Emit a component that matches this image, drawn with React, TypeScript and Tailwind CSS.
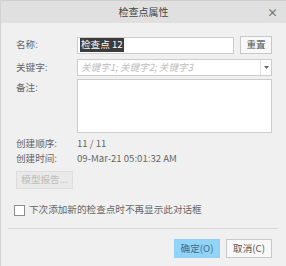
export default function App() {
  const font = { fontFamily: '"Noto Sans CJK SC", "Noto Sans", sans-serif' };
  return (
    <div
      style={font}
      className="flex h-[266px] w-[286px] flex-col overflow-hidden border-l border-[#d2d2d2] bg-[#f0f0f0] text-[9.6px] leading-none text-[#666]"
    >
      <div className="relative flex h-[23px] shrink-0 items-center justify-center border-t border-[#cdcdcd] bg-[#e0e0e0] text-[10px] text-[#444]">
        检查点属性
        <span className="absolute right-[8px] top-[6px] text-[11px] font-bold text-[#777]">×</span>
      </div>

      <div className="flex flex-1 flex-col pl-[15px] pr-[14px]">
        <div className="mt-[13px] flex h-[18px] items-center">
          <span className="w-[61px]">名称:</span>
          <div className="flex h-[17px] w-[157px] items-center border border-[#cccccc] bg-white pl-[2px]">
            <span className="bg-[#3c3c3c] px-[1px] py-[2px] text-white">检查点 12</span>
          </div>
          <button className="ml-auto h-[18px] w-[32px] border border-[#c8c8c8] bg-[#f8f8f8] text-[#555]">
            重置
          </button>
        </div>

        <div className="mt-[5px] flex h-[17px] items-center">
          <span className="w-[61px]">关键字:</span>
          <div className="flex h-[17px] flex-1 items-center border border-[#cccccc] bg-white">
            <span className="flex-1 pl-[3px] italic text-[#bcbcbc]">关键字1; 关键字2; 关键字3</span>
            <span className="flex h-full w-[11px] items-center justify-center border-l border-[#e0e0e0]">
              <svg width="5" height="3" viewBox="0 0 5 3">
                <path d="M0 0H5L2.5 3Z" fill="#666" />
              </svg>
            </span>
          </div>
        </div>

        <div className="mt-[3px] flex">
          <span className="mt-[4px] w-[61px]">备注:</span>
          <div className="h-[54px] flex-1 border border-[#cccccc] bg-white" />
        </div>

        <div className="mt-[3px] flex h-[15px] items-center">
          <span className="w-[61px]">创建顺序:</span>
          <span>11 / 11</span>
        </div>
        <div className="flex h-[15px] items-center">
          <span className="w-[61px]">创建时间:</span>
          <span>09-Mar-21 05:01:32 AM</span>
        </div>

        <button className="mt-[5px] h-[18px] w-[57px] border border-[#dddddd] bg-[#e9e9e9] text-[#bbbbbb]">
          模型报告...
        </button>

        <div className="mt-[15px] flex h-[12px] items-center">
          <span className="ml-[-2px] h-[11px] w-[11px] border border-[#8c8c8c] bg-white" />
          <span className="ml-[4px]">下次添加新的检查点时不再显示此对话框</span>
        </div>

        <div className="ml-[-8px] mr-[-6px] mt-[12px] h-px bg-[#d8d8d8]" />

        <div className="mt-[10px] flex justify-end gap-[6px]">
          <button className="h-[19px] w-[46px] border border-[#8fd0f3] bg-[#92d4f7] text-[#3a6a90]">
            确定(O)
          </button>
          <button className="h-[19px] w-[46px] border border-[#c8c8c8] bg-[#f8f8f8] text-[#555]">
            取消(C)
          </button>
        </div>
      </div>
    </div>
  );
}
